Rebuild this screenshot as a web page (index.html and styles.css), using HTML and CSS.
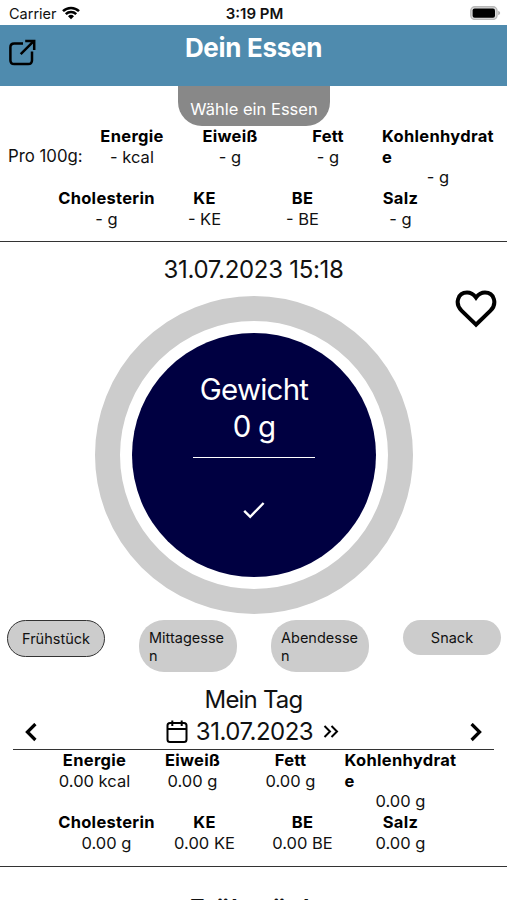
FILE: index.html
```html
<!DOCTYPE html>
<html lang="de">
<head>
    <meta charset="UTF-8">
    <meta name="viewport" content="width=device-width, initial-scale=1.0">
    <title>Dein Essen</title>
    <link rel="stylesheet" href="styles.css">
</head>
<body>
    <div class="status-bar">
        <div class="carrier">
            <span>Carrier</span>
            <svg class="wifi" viewBox="0 0 18 14" width="18" height="14">
                <path d="M1 5.2a11.3 11.3 0 0 1 16 0M3.8 8.2a7.4 7.4 0 0 1 10.4 0" fill="none" stroke="#000" stroke-width="2.5"/>
                <path d="M9 13.2L6 10.3a4.3 4.3 0 0 1 6 0z"/>
            </svg>
        </div>
        <span class="clock">3:19 PM</span>
        <svg class="battery" viewBox="0 0 31 14" width="31" height="14">
            <rect x="0.8" y="0.8" width="26.2" height="12.6" rx="4" fill="#ddd" stroke="#b8b8b8" stroke-width="1.4"/>
            <rect x="2.6" y="2.4" width="22.4" height="9.4" rx="2"/>
            <path d="M28.2 4.7q2 .8 2 2.3t-2 2.3z" fill="#b0b0b0"/>
        </svg>
    </div>

    <header class="header">
        <svg class="share" viewBox="0 0 28 28" width="28" height="28" fill="none" stroke="#000" stroke-width="2.5">
            <path d="M15 4.5H6.2Q2.4 4.5 2.4 8.3v12.9q0 3.8 3.8 3.8h14q3.8 0 3.8-3.8v-8.7"/>
            <path d="M12.7 15.2L25.7 2.2M17.2 2h9v9"/>
        </svg>
        <h1>Dein Essen</h1>
    </header>

    <section class="per-100">
        <button type="button" class="choose-btn">Wähle ein Essen</button>
        <div class="nutrients top-row">
            <span class="per-label">Pro 100g:</span>
            <div class="nutrient"><b>Energie</b><span>- kcal</span></div>
            <div class="nutrient"><b>Eiweiß</b><span>- g</span></div>
            <div class="nutrient"><b>Fett</b><span>- g</span></div>
            <div class="nutrient wide"><b>Kohlenhydrate</b><span>- g</span></div>
        </div>
        <div class="nutrients">
            <div class="nutrient"><b>Cholesterin</b><span>- g</span></div>
            <div class="nutrient"><b>KE</b><span>- KE</span></div>
            <div class="nutrient"><b>BE</b><span>- BE</span></div>
            <div class="nutrient"><b>Salz</b><span>- g</span></div>
        </div>
    </section>

    <main>
        <div class="datetime">31.07.2023 15:18</div>

        <div class="weight">
            <div class="ring">
                <div class="dial">
                    <span class="dial-label">Gewicht</span>
                    <span class="dial-label">0 g</span>
                    <div class="dial-line"></div>
                    <svg class="check" viewBox="0 0 24 18" width="24" height="18">
                        <path d="M2.2 9.8l6 6L21.6 2" fill="none" stroke="#fff" stroke-width="2.4"/>
                    </svg>
                </div>
            </div>
            <svg class="heart" viewBox="0 0 42 38" width="42" height="38">
                <path d="M21 34.6L6.5 20.6C-.5 13.6 2.8 2.6 12 2.6c4 0 6.7 2 9 5 2.3-3 5-5 9-5 9.2 0 12.5 11 5.5 18z" fill="none" stroke="#000" stroke-width="4"/>
            </svg>
        </div>

        <div class="meals">
            <button type="button" class="meal active">Frühstück</button>
            <button type="button" class="meal">Mittagessen</button>
            <button type="button" class="meal">Abendessen</button>
            <button type="button" class="meal">Snack</button>
        </div>

        <h2>Mein Tag</h2>
        <div class="day-nav">
            <svg viewBox="0 0 14 20" width="14" height="20" fill="none" stroke="#000" stroke-width="3.2">
                <path d="M11.4 1L3.4 9l8 8"/>
            </svg>
            <div class="day">
                <svg class="calendar" viewBox="0 0 22 24" width="22" height="24" fill="none" stroke="#000" stroke-width="2">
                    <rect x="1.5" y="3" width="19" height="19" rx="2.5"/>
                    <path d="M1.5 9h19M6.3 .5V6M15.7 .5V6"/>
                </svg>
                <span>31.07.2023</span>
                <svg class="today" viewBox="0 0 16 14" width="16" height="14" fill="none" stroke="#000" stroke-width="2">
                    <path d="M1.5 1L7 6.5 1.5 12M8.5 1L14 6.5 8.5 12"/>
                </svg>
            </div>
            <svg viewBox="0 0 14 20" width="14" height="20" fill="none" stroke="#000" stroke-width="3.2">
                <path d="M2.6 1l8 8-8 8"/>
            </svg>
        </div>

        <section class="day-total">
            <div class="nutrients">
                <div class="nutrient"><b>Energie</b><span>0.00 kcal</span></div>
                <div class="nutrient"><b>Eiweiß</b><span>0.00 g</span></div>
                <div class="nutrient"><b>Fett</b><span>0.00 g</span></div>
                <div class="nutrient wide"><b>Kohlenhydrate</b><span>0.00 g</span></div>
            </div>
            <div class="nutrients">
                <div class="nutrient"><b>Cholesterin</b><span>0.00 g</span></div>
                <div class="nutrient"><b>KE</b><span>0.00 KE</span></div>
                <div class="nutrient"><b>BE</b><span>0.00 BE</span></div>
                <div class="nutrient"><b>Salz</b><span>0.00 g</span></div>
            </div>
        </section>

        <h2 class="meal-title">Frühstück</h2>
    </main>
</body>
</html>
```
FILE: styles.css
```css
* {
    margin: 0;
    padding: 0;
    box-sizing: border-box;
}

body {
    font-family: Inter, 'Liberation Sans', sans-serif;
    font-size: 16.5px;
    line-height: 20.7px;
    color: #111;
    background: #fff;
    height: 900px;
    overflow: hidden;
}

button {
    font-family: inherit;
    border: none;
    cursor: pointer;
}

svg {
    display: block;
    flex: none;
}

.status-bar {
    display: grid;
    grid-template-columns: 1fr auto 1fr;
    align-items: center;
    height: 25px;
    padding: 3px 6px 0 9px;
    font-size: 14.5px;
}

.carrier {
    display: flex;
    gap: 5px;
    align-items: center;
}

.wifi {
    margin-top: -2px;
}

.clock {
    font-weight: 600;
    font-size: 15px;
    margin-right: 1px;
}

.battery {
    justify-self: end;
    margin-top: -2px;
}

.header {
    display: grid;
    grid-template-columns: 28px 1fr 28px;
    height: 61px;
    padding: 0 8px;
    background: #4f8bae;
}

.share {
    margin-top: 14px;
}

h1 {
    color: #fff;
    font-size: 26px;
    line-height: 32px;
    font-weight: 700;
    letter-spacing: -0.3px;
    text-align: center;
    padding-top: 7px;
}

.per-100 {
    display: flex;
    flex-direction: column;
    height: 156px;
    border-bottom: 1.5px solid #333;
}

.choose-btn {
    align-self: center;
    width: 152px;
    height: 40px;
    padding: 6px 0 0 1px;
    border-radius: 0 0 24px 24px;
    background: #888;
    color: #fff;
    font-size: 16.5px;
}

.nutrients {
    display: flex;
    justify-content: center;
}

.top-row {
    justify-content: flex-start;
    padding-left: 8px;
}

.per-label {
    width: 75px;
    padding-top: 20px;
    font-size: 16.8px;
    white-space: nowrap;
}

.nutrient {
    display: flex;
    flex-direction: column;
    align-items: center;
    width: 98px;
}

.nutrient b {
    font-weight: 700;
    color: #000;
    letter-spacing: 0.3px;
}

.wide {
    width: 122px;
    padding: 0 5px;
}

.wide b {
    width: 116px;
    margin-right: -4px;
    word-break: break-all;
}

.datetime {
    padding-top: 13px;
    font-size: 24px;
    line-height: 30px;
    letter-spacing: -0.3px;
    text-align: center;
}

.weight {
    display: grid;
    grid-template-columns: 95px 318px 1fr;
    margin-top: 11px;
}

.ring {
    grid-column: 2;
    display: flex;
    align-items: center;
    justify-content: center;
    width: 318px;
    height: 318px;
    border: 25px solid #ccc;
    border-radius: 50%;
}

.dial {
    display: flex;
    flex-direction: column;
    align-items: center;
    width: 244px;
    height: 244px;
    padding-top: 38px;
    border-radius: 50%;
    background: #000041;
    color: #fff;
}

.dial-label {
    font-size: 29.5px;
    line-height: 37px;
    letter-spacing: -0.8px;
}

.dial-line {
    width: 122px;
    height: 1px;
    margin-top: 12px;
    background: #fff;
}

.check {
    margin-top: 43px;
}

.heart {
    margin: -6px 0 0 42px;
}

.meals {
    display: flex;
    justify-content: space-between;
    align-items: flex-start;
    height: 52px;
    margin-top: 6px;
    padding: 0 6px 0 7px;
}

.meal {
    width: 98px;
    padding: 9px 10px 8px;
    border-radius: 25px;
    background: #ccc;
    color: #111;
    font-size: 14.5px;
    line-height: 17.5px;
    text-align: left;
    word-break: break-all;
}

.meal.active {
    border: 1.5px solid #333;
}

.active,
.meal:last-child {
    text-align: center;
}

h2 {
    margin-top: 12px;
    font-size: 24px;
    line-height: 32px;
    font-weight: 400;
    letter-spacing: -0.8px;
    text-align: center;
}

.day-nav {
    display: flex;
    align-items: center;
    justify-content: space-between;
    height: 34px;
    margin: 0 13px;
    padding: 0 11px;
    border-bottom: 1.5px solid #333;
}

.day {
    display: flex;
    align-items: center;
    margin-right: 2px;
    font-size: 24px;
    letter-spacing: -0.5px;
}

.calendar {
    margin: -2px 8px 0 0;
}

.today {
    margin: -1px 0 0 10px;
}

.day-total {
    height: 117px;
    border-bottom: 1.5px solid #333;
}

.meal-title {
    margin-top: 26px;
    font-size: 26.5px;
    font-weight: 600;
    letter-spacing: 0;
}
```
